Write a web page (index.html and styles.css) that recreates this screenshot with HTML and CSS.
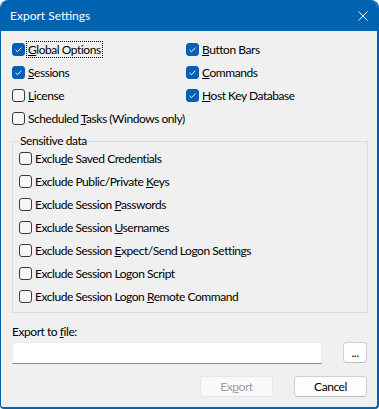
FILE: index.html
```html
<!DOCTYPE html>
<html>
<head>
<meta charset="utf-8">
<link rel="stylesheet" href="styles.css">
</head>
<body>
<div class="window">
  <div class="titlebar">
    <span class="title">Export Settings</span>
    <svg class="close" width="10" height="10" viewBox="0 0 10 10"><path d="M0.5 0.5 L9.5 9.5 M9.5 0.5 L0.5 9.5" stroke="#fff" stroke-width="1" fill="none"/></svg>
  </div>
  <div class="content">
    <div class="options">
      <div class="check"><span class="box on"><svg width="13" height="13" viewBox="0 0 13 13"><path d="M3.5 6.8 L5.5 8.7 L9.5 4.6" stroke="#fff" stroke-width="1" fill="none"/></svg></span><span class="lbl focus"><u>G</u>lobal Options</span></div>
      <div class="check"><span class="box on"><svg width="13" height="13" viewBox="0 0 13 13"><path d="M3.5 6.8 L5.5 8.7 L9.5 4.6" stroke="#fff" stroke-width="1" fill="none"/></svg></span><span class="lbl"><u>B</u>utton Bars</span></div>
      <div class="check"><span class="box on"><svg width="13" height="13" viewBox="0 0 13 13"><path d="M3.5 6.8 L5.5 8.7 L9.5 4.6" stroke="#fff" stroke-width="1" fill="none"/></svg></span><span class="lbl"><u>S</u>essions</span></div>
      <div class="check"><span class="box on"><svg width="13" height="13" viewBox="0 0 13 13"><path d="M3.5 6.8 L5.5 8.7 L9.5 4.6" stroke="#fff" stroke-width="1" fill="none"/></svg></span><span class="lbl"><u>C</u>ommands</span></div>
      <div class="check"><span class="box"></span><span class="lbl"><u>L</u>icense</span></div>
      <div class="check"><span class="box on"><svg width="13" height="13" viewBox="0 0 13 13"><path d="M3.5 6.8 L5.5 8.7 L9.5 4.6" stroke="#fff" stroke-width="1" fill="none"/></svg></span><span class="lbl"><u>H</u>ost Key Database</span></div>
      <div class="check wide"><span class="box"></span><span class="lbl">Scheduled <u>T</u>asks (Windows only)</span></div>
    </div>
    <fieldset class="group">
      <legend>Sensitive data</legend>
      <div class="group-list">
        <div class="check"><span class="box"></span><span class="lbl">Exclu<u>d</u>e Saved Credentials</span></div>
        <div class="check"><span class="box"></span><span class="lbl">Exclude Public/Private <u>K</u>eys</span></div>
        <div class="check"><span class="box"></span><span class="lbl">Exclude Session <u>P</u>asswords</span></div>
        <div class="check"><span class="box"></span><span class="lbl">Exclude Session <u>U</u>sernames</span></div>
        <div class="check"><span class="box"></span><span class="lbl">Exclude Session <u>E</u>xpect/Send Logon Settings</span></div>
        <div class="check"><span class="box"></span><span class="lbl">Exclude Session Lo<u>g</u>on Script</span></div>
        <div class="check"><span class="box"></span><span class="lbl">Exclude Session Logon <u>R</u>emote Command</span></div>
      </div>
    </fieldset>
    <div class="file-label">Export to <u>f</u>ile:</div>
    <div class="file-row">
      <div class="input"></div>
      <div class="btn browse">...</div>
    </div>
    <div class="actions">
      <div class="btn disabled">Ex<u>p</u>ort</div>
      <div class="btn">Cancel</div>
    </div>
  </div>
</div>
</body>
</html>
```

FILE: styles.css
```css
html, body {
  margin: 0;
  padding: 0;
  background: #ffffff;
}
body {
  font-family: "Segoe UI", Lato, sans-serif;
  font-size: 12px;
  letter-spacing: -0.45px;
  color: #000;
}
.window {
  width: 379px;
  height: 409px;
  box-sizing: border-box;
  border-style: solid;
  border-color: #0063b1;
  border-width: 0 2px 2px 1px;
  border-radius: 8px 8px 4px 4px;
  background: #f0f0f0;
  display: flex;
  flex-direction: column;
  overflow: hidden;
}
.titlebar {
  height: 31px;
  flex: none;
  background: #0063b1;
  display: flex;
  align-items: center;
  justify-content: space-between;
  padding: 0 9px 0 9px;
  color: #fff;
}
.title {
  font-size: 12px;
  line-height: 16px;
  letter-spacing: 0;
}
.close {
  display: block;
}
.content {
  flex: 1;
  padding: 7px 9px 0 11px;
  display: flex;
  flex-direction: column;
}
.options {
  display: grid;
  grid-template-columns: 174px 1fr;
  grid-auto-rows: 23px;
}
.wide {
  grid-column: 1 / 3;
}
.check {
  display: flex;
  align-items: center;
  height: 23px;
  white-space: nowrap;
}
.box {
  width: 13px;
  height: 13px;
  box-sizing: border-box;
  border: 1px solid #3b3b3b;
  border-radius: 3px;
  background: #f6f6f6;
  margin-right: 1px;
  flex: none;
  position: relative;
}
.box.on {
  background: #005fb8;
  border-color: #005fb8;
}
.box svg {
  position: absolute;
  left: -1px;
  top: -1px;
}
.lbl {
  padding: 1px 1px;
  line-height: 13px;
  border: 1px solid transparent;
}
.lbl.focus {
  border: 1px dotted #000;
}
.group {
  margin: 4px 0 0 0;
  padding: 0 6px 4px 6px;
  border: 1px solid #dcdcdc;
  min-width: 0;
}
.group legend {
  padding: 0 1px;
  line-height: 14px;
}
.group-list {
  margin-top: -1px;
}
.file-label {
  margin-top: 11px;
  line-height: 16px;
}
.file-row {
  margin-top: 2px;
  display: flex;
  align-items: flex-start;
  gap: 21px;
  padding-right: 1px;
}
.input {
  flex: 1;
  height: 22px;
  box-sizing: border-box;
  background: #fff;
  border: 1px solid #ececec;
  border-bottom: 1px solid #868686;
  border-radius: 3px 3px 0 0;
}
.btn {
  height: 21px;
  box-sizing: border-box;
  border: 1px solid #d0d0d0;
  border-bottom-color: #bdbdbd;
  border-radius: 4px;
  background: #fdfdfd;
  display: flex;
  align-items: center;
  justify-content: center;
  line-height: 14px;
}
.browse {
  width: 24px;
}
.actions {
  margin-top: 12px;
  display: flex;
  justify-content: flex-end;
  gap: 21px;
  padding-right: 1px;
}
.actions .btn {
  width: 73px;
}
.btn.disabled {
  background: #f9f9f9;
  border-color: #e6e6e6;
  color: #9d9d9d;
}
```
